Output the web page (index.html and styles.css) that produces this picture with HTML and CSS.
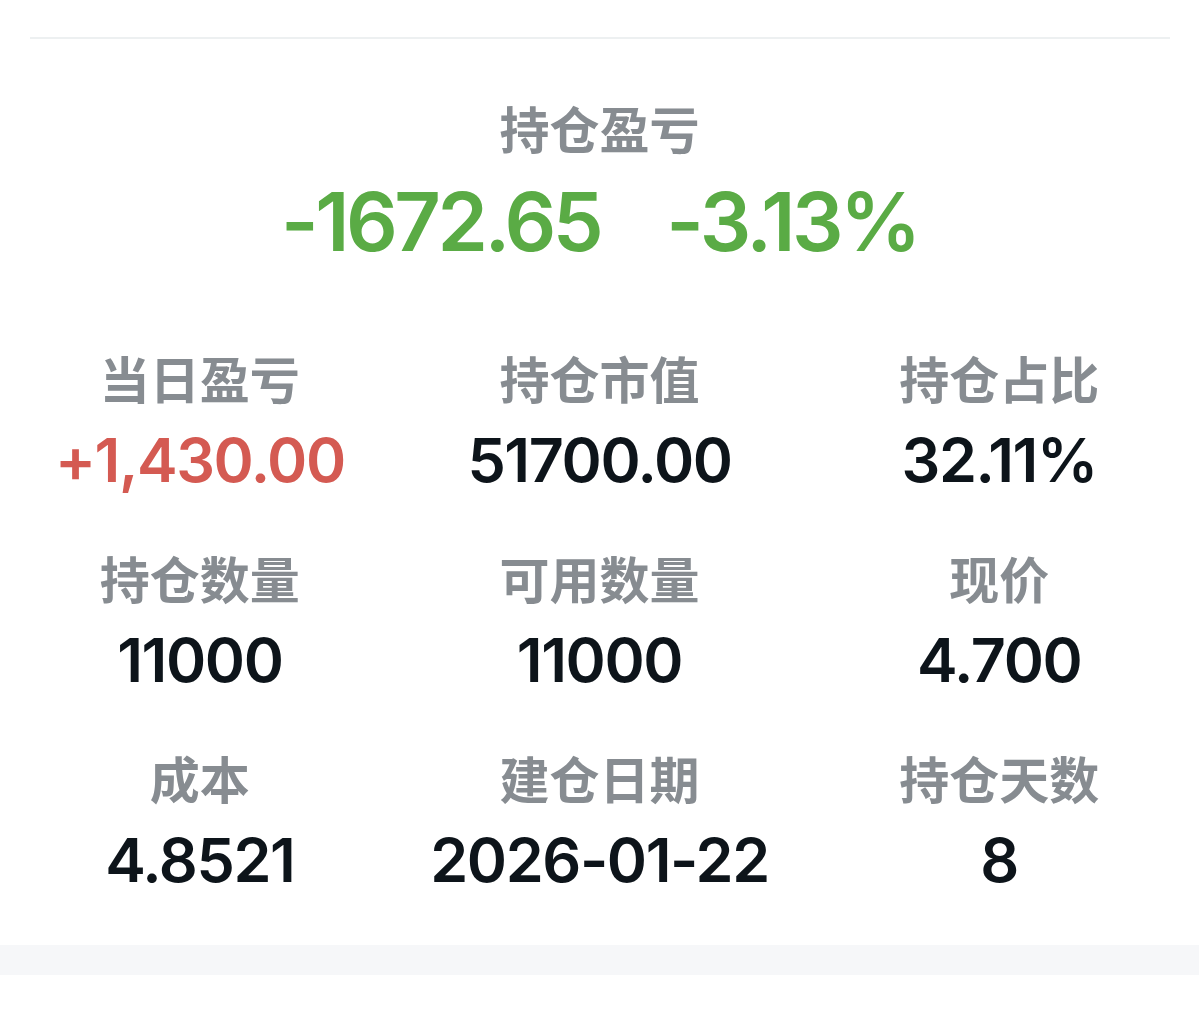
FILE: index.html
```html
<!DOCTYPE html>
<html lang="zh-CN">
<head>
<meta charset="utf-8">
<title>持仓盈亏</title>
<link rel="stylesheet" href="styles.css">
</head>
<body>
<div class="card">
  <div class="divider"></div>
  <div class="summary">
    <div class="summary-title">持仓盈亏</div>
    <div class="summary-values">
      <span class="green">-1672.65</span>
      <span class="green">-3.13%</span>
    </div>
  </div>
  <div class="grid">
    <div class="cell"><div class="label">当日盈亏</div><div class="value red">+1,430.00</div></div>
    <div class="cell"><div class="label">持仓市值</div><div class="value">51700.00</div></div>
    <div class="cell"><div class="label">持仓占比</div><div class="value">32.11%</div></div>
    <div class="cell"><div class="label">持仓数量</div><div class="value">11000</div></div>
    <div class="cell"><div class="label">可用数量</div><div class="value">11000</div></div>
    <div class="cell"><div class="label">现价</div><div class="value">4.700</div></div>
    <div class="cell"><div class="label">成本</div><div class="value">4.8521</div></div>
    <div class="cell"><div class="label">建仓日期</div><div class="value">2026-01-22</div></div>
    <div class="cell"><div class="label">持仓天数</div><div class="value">8</div></div>
  </div>
</div>
<div class="band"></div>
</body>
</html>
```
FILE: styles.css
```css
html, body {
  margin: 0;
  padding: 0;
  background: #ffffff;
}
body {
  font-family: Inter, "Noto Sans", "Noto Sans CJK SC", sans-serif;
}
.card {
  padding-top: 37px;
  padding-bottom: 45px;
}
.divider {
  height: 2px;
  margin: 0 29px 0 30px;
  background: #edf0f1;
}
.summary {
  margin-top: 61px;
  display: flex;
  flex-direction: column;
  align-items: center;
  gap: 17px;
}
.summary-title {
  font-family: "Noto Sans CJK SC", sans-serif;
  font-size: 50px;
  font-weight: 700;
  line-height: 54px;
  padding-bottom: 6px;
  color: #878c91;
}
.summary-values {
  display: flex;
  gap: 66px;
  line-height: 90px;
}
.green {
  font-family: Inter, sans-serif;
  font-size: 81px;
  font-weight: 600;
  letter-spacing: -3.5px;
  color: #5aab45;
}
.grid {
  margin-top: 83px;
  display: grid;
  grid-template-columns: repeat(3, 1fr);
  row-gap: 50px;
}
.cell {
  display: flex;
  flex-direction: column;
  align-items: center;
  gap: 10px;
}
.label {
  font-family: "Noto Sans CJK SC", sans-serif;
  font-size: 50px;
  font-weight: 700;
  line-height: 54px;
  padding-bottom: 6px;
  color: #878c91;
}
.value {
  font-family: Inter, sans-serif;
  font-size: 61px;
  font-weight: 600;
  line-height: 80px;
  color: #0d141a;
  letter-spacing: -1.4px;
}
.value.red {
  color: #d45a52;
}
.band {
  height: 30px;
  background: #f6f7f9;
}
```
